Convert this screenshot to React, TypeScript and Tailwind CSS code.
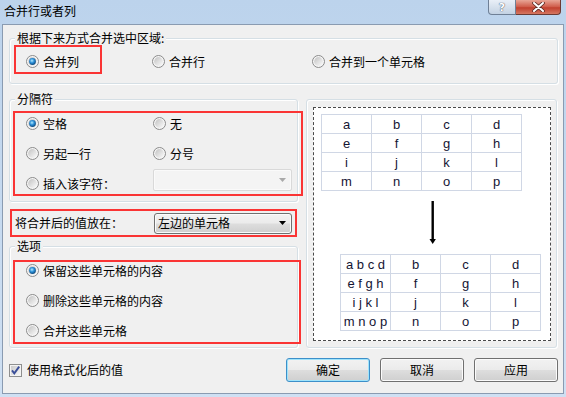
import React from "react";

const CJK = "[font-family:'Noto_Sans_CJK_SC','Noto_Sans',sans-serif]";
const LAT = "[font-family:'Liberation_Sans',Arial,sans-serif]";
const BTN_BG =
  "bg-[linear-gradient(to_bottom,#f2f2f2_0%,#ebebeb_48%,#dddddd_52%,#cfcfcf_100%)]";

function Radio({ checked }: { checked?: boolean }) {
  return (
    <svg width="13" height="13" viewBox="0 0 13 13" className="shrink-0">
      <defs>
        <linearGradient id="rIn" x1="0" y1="0" x2="1" y2="1">
          <stop offset="0" stopColor="#c2c2c2" />
          <stop offset="1" stopColor="#fbfbfb" />
        </linearGradient>
        <radialGradient id="rDot" cx="0.42" cy="0.38" r="0.7">
          <stop offset="0" stopColor="#b5ecff" />
          <stop offset="0.45" stopColor="#2b8fd8" />
          <stop offset="1" stopColor="#093c6a" />
        </radialGradient>
      </defs>
      <circle cx="6.5" cy="6.5" r="6" fill="#f5f5f5" stroke="#8a8a8a" />
      <circle cx="6.5" cy="6.5" r="4.4" fill="url(#rIn)" />
      {checked && <circle cx="6.5" cy="6.5" r="3.4" fill="url(#rDot)" />}
    </svg>
  );
}

function RadioItem({ label, checked }: { label: string; checked?: boolean }) {
  return (
    <div className="flex items-center gap-[4px]">
      <Radio checked={checked} />
      <span className="text-[12px] leading-[14px] whitespace-nowrap">{label}</span>
    </div>
  );
}

function Group({
  label,
  className,
  children,
}: {
  label?: string;
  className?: string;
  children?: React.ReactNode;
}) {
  return (
    <div
      className={`relative border border-[#d5dfe5] rounded-[3px] shadow-[inset_1px_1px_0_#ffffff,1px_1px_0_#ffffff] ${className ?? ""}`}
    >
      {label && (
        <span className="absolute left-[5px] top-[-8px] px-[2px] bg-[#f0f0f0] text-[12px] leading-[14px] whitespace-nowrap">
          {label}
        </span>
      )}
      {children}
    </div>
  );
}

function Checkbox() {
  return (
    <svg width="13" height="13" viewBox="0 0 13 13" className="shrink-0">
      <defs>
        <linearGradient id="cbIn" x1="0" y1="0" x2="1" y2="1">
          <stop offset="0" stopColor="#cbcbcb" />
          <stop offset="1" stopColor="#f7f7f7" />
        </linearGradient>
      </defs>
      <rect x="0.5" y="0.5" width="12" height="12" fill="#f4f4f4" stroke="#8e8f8f" />
      <rect x="2" y="2" width="9" height="9" fill="url(#cbIn)" />
      <path d="M3 6.3 L5.3 9.3 L10.2 2.6" stroke="#3b4f99" strokeWidth="1.9" fill="none" />
    </svg>
  );
}

function Table({ rows, first }: { rows: string[][]; first?: boolean }) {
  return (
    <div className={`grid grid-cols-[repeat(4,50px)] border-l border-t border-[#d0d7e5] ${LAT}`}>
      {rows.flat().map((c, i) => (
        <div
          key={i}
          className={`h-[19px] border-r border-b border-[#d0d7e5] flex items-center justify-center text-[13px] leading-[15px] text-[#141433] whitespace-pre ${
            first && i % 4 === 0 ? "tracking-[0px]" : ""
          }`}
        >
          {c}
        </div>
      ))}
    </div>
  );
}

function Button({ label, def }: { label: string; def?: boolean }) {
  return (
    <div
      className={`w-[84px] h-[24px] rounded-[3px] border flex items-center justify-center text-[12px] leading-[14px] ${BTN_BG} ${
        def
          ? "border-[#3c8fc9] shadow-[inset_0_0_0_1px_#9fe3fb]"
          : "border-[#707070] shadow-[inset_0_0_0_1px_#fbfbfb]"
      }`}
    >
      {label}
    </div>
  );
}

export default function App() {
  const top = [
    ["a", "b", "c", "d"],
    ["e", "f", "g", "h"],
    ["i", "j", "k", "l"],
    ["m", "n", "o", "p"],
  ];
  const bottom = [
    ["a b c d", "b", "c", "d"],
    ["e f g h", "f", "g", "h"],
    ["i j k l", "j", "k", "l"],
    ["m n o p", "n", "o", "p"],
  ];
  return (
    <div
      className={`w-[566px] h-[397px] overflow-hidden flex flex-col bg-[linear-gradient(to_bottom,#bcd3ec,#cfe0f3)] text-black ${CJK}`}
    >
      {/* title bar */}
      <div className="h-[24px] shrink-0 flex items-start">
        <span className="ml-[4px] mt-[4px] text-[12px] leading-[14px]">合并行或者列</span>
        <div className="ml-auto mr-[5px] flex">
          <div className="w-[28px] h-[15px] rounded-bl-[4px] border border-t-0 border-[#6f8096] bg-[linear-gradient(to_bottom,#e9eff7,#c3d2e3)] flex items-center justify-center">
            <span className="text-[11px] leading-[11px] font-bold text-white [text-shadow:0_0_1px_#4a5566,0_0_1px_#4a5566] [font-family:'DejaVu_Sans',sans-serif]">
              ?
            </span>
          </div>
          <div className="w-[45px] h-[15px] rounded-br-[4px] border border-t-0 border-l-0 border-[#6c3a33] bg-[linear-gradient(to_bottom,#e8a596,#cf5a48_50%,#c13f2e_55%,#d57761)] flex items-center justify-center">
            <svg width="13" height="10" viewBox="0 0 13 10">
              <path d="M2 1 L11 9 M11 1 L2 9" stroke="#5a2a24" strokeWidth="3.6" strokeLinecap="round" />
              <path d="M2 1 L11 9 M11 1 L2 9" stroke="#ffffff" strokeWidth="2" strokeLinecap="round" />
            </svg>
          </div>
        </div>
      </div>

      {/* client area */}
      <div className="mx-[2px] h-[370px] shrink-0 border border-[#8a9bb1] bg-[#f0f0f0] flex flex-col items-start">
        {/* group 1 */}
        <Group label="根据下来方式合并选中区域:" className="ml-[6px] mt-[13px] w-[549px] h-[46px] flex items-start">
          <div className="ml-[4px] mt-[6px] w-[88px] h-[29px] border-2 border-[#fa3434] flex items-center pl-[10px] pt-[4px]">
            <RadioItem checked label="合并列" />
          </div>
          <div className="ml-[50px] mt-[12px] w-[160px] h-[21px] flex items-center">
            <RadioItem label="合并行" />
          </div>
          <div className="mt-[12px] h-[21px] flex items-center">
            <RadioItem label="合并到一个单元格" />
          </div>
        </Group>

        {/* middle */}
        <div className="ml-[6px] mt-[15px] flex gap-[8px]">
          {/* left column */}
          <div className="w-[289px] flex flex-col">
            <Group label="分隔符" className="h-[103px] flex flex-col items-start">
              <div className="ml-[3px] mt-[11px] w-[290px] h-[85px] border-2 border-[#fa3434] flex flex-col gap-[9px] pl-[11px]">
                <div className="h-[21px] flex items-center">
                  <div className="w-[127px]">
                    <RadioItem checked label="空格" />
                  </div>
                  <RadioItem label="无" />
                </div>
                <div className="h-[21px] flex items-center">
                  <div className="w-[127px]">
                    <RadioItem label="另起一行" />
                  </div>
                  <RadioItem label="分号" />
                </div>
                <div className="h-[21px] flex items-center">
                  <div className="w-[127px]">
                    <RadioItem label="插入该字符：" />
                  </div>
                  <div className="self-start -mt-[4px] w-[139px] h-[22px] rounded-[2px] border border-[#d9d9d9] bg-[#f4f4f4] shadow-[inset_0_0_0_1px_#fafafa] flex items-center justify-end pr-[5px]">
                    <svg width="7" height="4" viewBox="0 0 7 4">
                      <polygon points="0,0 7,0 3.5,4" fill="#a9a9a9" />
                    </svg>
                  </div>
                </div>
              </div>
            </Group>

            <div className="ml-[1px] mt-[7px] w-[287px] h-[28px] border-2 border-[#fa3434] flex items-center pl-[3px]">
              <span className="text-[12px] leading-[14px] whitespace-nowrap">将合并后的值放在：</span>
              <div
                className={`ml-auto mr-[3px] w-[138px] h-[21px] rounded-[3px] border border-[#707070] shadow-[inset_0_0_0_1px_#fbfbfb] ${BTN_BG} flex items-center pl-[3px] pr-[5px]`}
              >
                <span className="text-[12px] leading-[14px]">左边的单元格</span>
                <svg width="7" height="4" viewBox="0 0 7 4" className="ml-auto">
                  <polygon points="0,0 7,0 3.5,4" fill="#000" />
                </svg>
              </div>
            </div>

            <Group label="选项" className="mt-[9px] h-[102px] flex flex-col items-start">
              <div className="ml-[3px] mt-[13px] w-[288px] h-[84px] border-2 border-[#fa3434] flex flex-col gap-[13px] pl-[11px]">
                <div className="h-[17px] flex items-center">
                  <RadioItem checked label="保留这些单元格的内容" />
                </div>
                <div className="h-[17px] flex items-center">
                  <RadioItem label="删除这些单元格的内容" />
                </div>
                <div className="h-[17px] flex items-center">
                  <RadioItem label="合并这些单元格" />
                </div>
              </div>
            </Group>
          </div>

          {/* right preview */}
          <Group className="w-[251px] h-[249px] flex flex-col items-start">
            <div className="ml-[6px] mt-[7px] w-[238px] h-[234px] border border-dashed border-[#4a4a4a] bg-white flex flex-col items-start">
              <div className="ml-[7px] mt-[6px]">
                <Table rows={top} />
              </div>
              <svg width="9" height="43" viewBox="0 0 9 43" className="self-center mt-[10px]">
                <rect x="3.5" y="0" width="2.4" height="39" fill="#000" />
                <polygon points="1.5,38 7.9,38 4.7,43" fill="#000" />
              </svg>
              <div className="ml-[26px] mt-[10px]">
                <Table rows={bottom} first />
              </div>
            </div>
          </Group>
        </div>

        {/* bottom row */}
        <div className="mt-[10px] w-full h-[24px] flex items-center">
          <div className="ml-[6px] flex items-center gap-[5px]">
            <Checkbox />
            <span className="text-[12px] leading-[14px]">使用格式化后的值</span>
          </div>
          <div className="ml-auto mr-[5px] flex gap-[10px]">
            <Button label="确定" def />
            <Button label="取消" />
            <Button label="应用" />
          </div>
        </div>
      </div>
    </div>
  );
}
